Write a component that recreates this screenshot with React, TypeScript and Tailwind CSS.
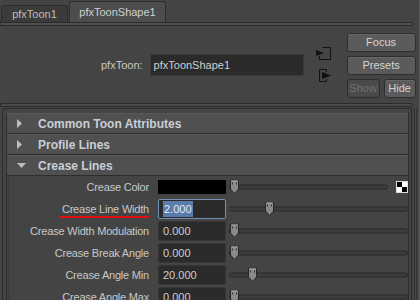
import React from 'react';

const rows = [
  { label: 'Crease Color', kind: 'color', pos: 0 },
  { label: 'Crease Line Width', value: '2.000', pos: 35, active: true },
  { label: 'Crease Width Modulation', value: '0.000', pos: 0 },
  { label: 'Crease Break Angle', value: '0.000', pos: 0 },
  { label: 'Crease Angle Min', value: '20.000', pos: 18 },
  { label: 'Crease Angle Max', value: '0.000', pos: 0 },
];

const Thumb = ({ left }: { left: number }) => (
  <svg width="11" height="15" viewBox="0 0 11 15" className="absolute top-1/2 -translate-y-1/2" style={{ left }}>
    <path d="M1.5 0.5 H9.5 V9.5 L5.5 14 L1.5 9.5 Z" fill="#8a8a8a" stroke="#262626" />
    <path d="M2.5 1.5 H8.5" stroke="#a8a8a8" />
    <rect x="3" y="3" width="1" height="2" fill="#333" />
    <rect x="7" y="3" width="1" height="2" fill="#333" />
  </svg>
);

const Slider = ({ pos, short }: { pos: number; short?: boolean }) => (
  <div className={`relative h-full ${short ? 'w-[159px]' : 'flex-1'}`}>
    <div className="absolute left-0 right-0 top-1/2 -translate-y-1/2 h-[5px] rounded-[2px] border border-[#2a2a2a] bg-[#3d3d3d]" />
    <Thumb left={pos} />
  </div>
);

const Header = ({ title, open }: { title: string; open?: boolean }) => (
  <div className="h-[21px] flex items-center bg-[#505050] border-t border-[#5a5a5a] border-b border-b-[#2c2c2c] pl-[10px]">
    <div className="w-[21px] flex items-center">
      {open ? (
        <svg width="9" height="5" viewBox="0 0 9 5"><path d="M0 0 H9 L4.5 5 Z" fill="#bdbdbd" /></svg>
      ) : (
        <svg width="5" height="9" viewBox="0 0 5 9"><path d="M0 0 L5 4.5 L0 9 Z" fill="#bdbdbd" /></svg>
      )}
    </div>
    <span className="text-[12px] font-bold text-[#c9ced6]">{title}</span>
  </div>
);

const Btn = ({ children, w, disabled }: { children: React.ReactNode; w: string; disabled?: boolean }) => (
  <div
    className={`${w} h-[19px] flex items-center justify-center rounded-[3px] border border-[#2e2e2e] text-[11px] ${
      disabled ? 'bg-[#4a4a4a] text-[#727272]' : 'bg-[#5b5b5b] text-[#d6d6d6] shadow-[inset_0_1px_0_#686868]'
    }`}
  >
    {children}
  </div>
);

export default function App() {
  return (
    <div className="w-[420px] h-[300px] bg-[#444444] overflow-hidden flex flex-col font-['Liberation_Sans',Arial,sans-serif] text-[#c8c8c8] border-r border-[#5a5a5a]">
      {/* tabs */}
      <div className="h-[22px] flex items-end gap-[1px] pl-[1px] shrink-0">
        <div className="w-[67px] h-[17px] rounded-t-[3px] border border-b-0 border-[#2c2c2c] bg-[#3b3b3b] flex items-center justify-center text-[11px] text-[#bdbdbd]">
          pfxToon1
        </div>
        <div className="w-[97px] h-[21px] rounded-t-[3px] border border-b-0 border-[#2c2c2c] bg-[#4d4d4d] flex items-center justify-center text-[11px] text-[#d0d0d0]">
          pfxToonShape1
        </div>
      </div>
      <div className="h-[4px] mr-[6px] rounded-r-[2px] border border-[#2c2c2c] bg-[#4f4f4f] shrink-0" />

      {/* node row */}
      <div className="h-[77px] flex items-start shrink-0">
        <div className="flex items-center mt-[28px] pl-[101px]">
          <span className="text-[11px] text-[#c8c8c8]">pfxToon:</span>
          <div className="ml-[7px] w-[154px] h-[22px] rounded-[2px] bg-[#2b2b2b] border border-[#383838] flex items-center pl-[3px] text-[11px] text-[#cfcfcf]">
            pfxToonShape1
          </div>
        </div>
        <div className="ml-[12px] mt-[21px] flex flex-col gap-[9px]">
          <svg width="16" height="13" viewBox="0 0 16 13">
            <path d="M6.5 0.5 H14.5 V12.5 H3.5 V9" fill="none" stroke="#111" />
            <path d="M0 3 L8 6 L0 9 Z" fill="#111" />
          </svg>
          <svg width="16" height="13" viewBox="0 0 16 13">
            <path d="M10.5 3 V0.5 H3.5 V12.5 H10.5 V10" fill="none" stroke="#111" />
            <path d="M6 3 L15 6.5 L6 10 Z" fill="#111" />
          </svg>
        </div>
        <div className="ml-[15px] mt-[7px] flex flex-col gap-[4px]">
          <Btn w="w-[69px]">Focus</Btn>
          <Btn w="w-[69px]">Presets</Btn>
          <div className="flex gap-[4px]">
            <Btn w="w-[33px]" disabled>Show</Btn>
            <Btn w="w-[32px]">Hide</Btn>
          </div>
        </div>
      </div>
      <div className="h-[4px] mr-[6px] rounded-r-[2px] border border-[#2c2c2c] bg-[#4a4a4a] shrink-0" />

      {/* attribute scroll area */}
      <div className="flex-1 flex min-h-0 ml-[2px] mt-[1px]">
        <div className="flex-1 rounded-tl-[4px] border-l border-t border-[#2e2e2e] pt-[4px] pl-[3px] pr-[2px]">
          <div className="rounded-tl-[2px] border-l border-r border-[#2c2c2c]">
            <Header title="Common Toon Attributes" />
            <Header title="Profile Lines" />
            <Header title="Crease Lines" open />
            <div className="ml-[1px] border-l border-[#3a3a3a]">
              {rows.map((r) => (
                <div key={r.label} className="h-[22px] flex items-center">
                  <div className="w-[140px] text-right text-[11px] tracking-[-0.2px] text-[#c8c8c8]">
                    {r.active ? (
                      <span className="border-b-2 border-[#e01010] pb-[1px] pl-[2px]">{r.label}</span>
                    ) : (
                      r.label
                    )}
                  </div>
                  {r.kind === 'color' ? (
                    <>
                      <div className="ml-[9px] w-[68px] h-[14px] bg-black" />
                      <div className="ml-[3px] h-full flex items-center">
                        <Slider pos={0} short />
                      </div>
                      <div className="ml-[8px] w-[12px] h-[12px] border border-[#dcdcdc] grid grid-cols-2 grid-rows-2">
                        <div className="bg-black" />
                        <div className="bg-white" />
                        <div className="bg-white" />
                        <div className="bg-black" />
                      </div>
                    </>
                  ) : (
                    <>
                      <div
                        className={`ml-[9px] w-[68px] h-[20px] rounded-[2px] bg-[#2b2b2b] flex items-center pl-[4px] text-[11px] ${
                          r.active ? 'border border-[#6f8fb5]' : 'border border-[#363636]'
                        }`}
                      >
                        {r.active ? (
                          <span className="bg-[#5a7cab] text-[#e6ecf5] px-[1px]">{r.value}</span>
                        ) : (
                          <span className="text-[#cdcdcd]">{r.value}</span>
                        )}
                      </div>
                      <div className="ml-[3px] flex-1 h-full flex">
                        <Slider pos={r.pos} />
                      </div>
                    </>
                  )}
                </div>
              ))}
            </div>
          </div>
        </div>
        <div className="w-[9px] border-l border-[#2a2a2a] flex">
          <div className="ml-[2px] w-[3px] border-x border-[#333] bg-[#484848]" />
        </div>
      </div>
    </div>
  );
}
